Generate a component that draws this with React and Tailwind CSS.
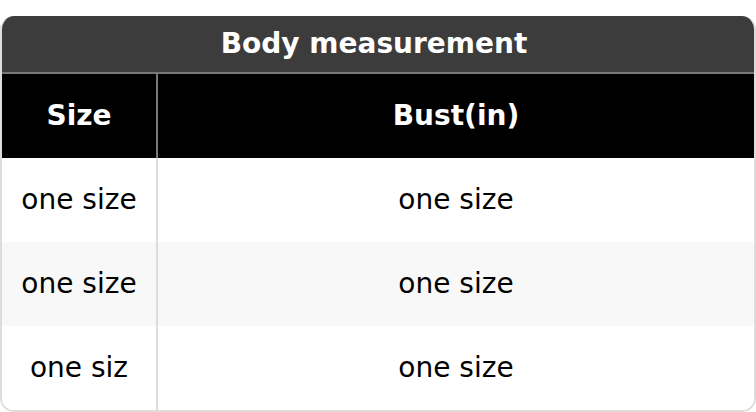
const rows = [
	[ "one size", "one size" ],
	[ "one size", "one size" ],
	[ "one siz", "one size" ],
];

export default function App() {
	return (
		<div className="w-[756px] h-[412px] bg-white pt-4" style={ { fontFamily: '"DejaVu Sans", Verdana, sans-serif' } }>
			<div className="w-[756px] h-[396px] border-2 border-[#dddddd] border-t-0 rounded-[14px] overflow-hidden">
				<div className="h-[58px] bg-[#3c3c3c] border-b-2 border-[#777777] flex items-center justify-center text-white font-bold text-[28px] pr-2">
					Body measurement
				</div>
				<div className="grid grid-cols-[156px_1fr] h-[84px] bg-black text-white font-bold text-[28px]">
					<div className="flex items-center justify-center border-r-2 border-[#777777]">Size</div>
					<div className="flex items-center justify-center">Bust(in)</div>
				</div>
				{ rows.map((r, i) => (
					<div key={ i } className={ `grid grid-cols-[156px_1fr] h-[84px] text-[28px] text-black ${ i % 2 === 1 ? "bg-[#f8f8f8]" : "bg-white" }` }>
						<div className="flex items-center justify-center border-r-2 border-[#dddddd]">{ r[ 0 ] }</div>
						<div className="flex items-center justify-center">{ r[ 1 ] }</div>
					</div>
				)) }
			</div>
		</div>
	);
}
